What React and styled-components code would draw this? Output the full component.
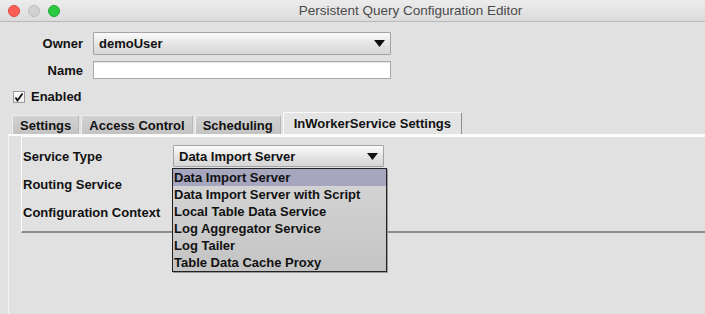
import * as React from "react"
import styled, { createGlobalStyle } from "styled-components"

const Global = createGlobalStyle`
  html, body {
    margin: 0;
    padding: 0;
    background: #e1e1e1;
  }
  body {
    font-family: "Liberation Sans", Arial, sans-serif;
    font-size: 12px;
    color: #111;
  }
`

const Window = styled.div`
  width: 705px;
  height: 314px;
  overflow: hidden;
  background: #e1e1e1;
  display: flex;
  flex-direction: column;
`

const TitleBar = styled.div`
  height: 22px;
  flex: none;
  box-sizing: border-box;
  border-bottom: 1px solid #b9b9b9;
  background: linear-gradient(#ececec, #dcdcdc);
  display: flex;
  align-items: center;
  padding-left: 8px;
`

const Light = styled.span`
  width: 12px;
  height: 12px;
  border-radius: 50%;
  margin-right: 8px;
  box-sizing: border-box;
  background: ${p => p.color};
  border: 1px solid ${p => p.edge};
`

const Title = styled.div`
  flex: 1;
  text-align: center;
  font-size: 13.5px;
  color: #4a4a4a;
  padding-left: 48px;
`

const Body = styled.div`
  flex: 1;
  display: flex;
  flex-direction: column;
  padding-top: 10px;
`

const Form = styled.div`
  display: grid;
  grid-template-columns: 83px 298px;
  column-gap: 10px;
  row-gap: 6px;
  align-items: center;
`

const Label = styled.div`
  font-weight: bold;
  font-size: 13px;
  text-align: ${p => (p.left ? "left" : "right")};
`

const Combo = styled.div`
  height: ${p => p.h || 23}px;
  box-sizing: border-box;
  border: 1px solid #a3a3a3;
  border-radius: 1px;
  background: linear-gradient(#fbfbfb, #e4e4e4 55%, #d6d6d6);
  display: flex;
  align-items: center;
  justify-content: space-between;
  padding: 0 5px 0 5px;
  font-weight: bold;
  font-size: 13px;
  position: relative;
`

const Arrow = () => (
  <svg width="11" height="7" viewBox="0 0 11 7">
    <path d="M0 0 L11 0 L5.5 7 Z" fill="#111" />
  </svg>
)

const TextField = styled.div`
  height: 18px;
  box-sizing: border-box;
  border: 1px solid #a8a8a8;
  background: #fff;
  box-shadow: inset 0 1px 0 #e6e6e6;
`

const CheckRow = styled.div`
  display: flex;
  align-items: center;
  gap: 6px;
  margin: 10px 0 0 13px;
  font-weight: bold;
  font-size: 13px;
`

const Box = styled.span`
  width: 12px;
  height: 12px;
  box-sizing: border-box;
  border: 1px solid #9a9a9a;
  background: linear-gradient(#ffffff, #ececec);
  display: flex;
  align-items: center;
  justify-content: center;
`

const Tabs = styled.div`
  display: flex;
  align-items: flex-end;
  gap: 2px;
  margin: 8px 0 0 12px;
  height: 22px;
`

const Tab = styled.div`
  height: ${p => (p.active ? 22 : 19)}px;
  box-sizing: border-box;
  padding: 0 ${p => (p.active ? 10 : 7)}px;
  display: flex;
  align-items: center;
  font-weight: bold;
  font-size: 13px;
  background: ${p => (p.active ? "#e4e4e4" : "linear-gradient(#d2d2d2, #c3c3c3)")};
  border-top: 1px solid ${p => (p.active ? "#fafafa" : "#ededed")};
  border-left: 1px solid ${p => (p.active ? "#fafafa" : "#ededed")};
  border-right: 1px solid ${p => (p.active ? "#8e8e8e" : "#b8b8b8")};
  border-radius: 2px 2px 0 0;
`

const Pane = styled.div`
  flex: 1;
  margin-left: 8px;
  border-top: 2px solid #fbfbfb;
  border-left: 1px solid #f6f6f6;
  padding: 0 0 0 12px;
`

const Inner = styled.div`
  height: 97px;
  box-sizing: border-box;
  border-left: 1px solid #fbfbfb;
  border-top: 1px solid #fbfbfb;
  border-bottom: 2px solid #8c8c8c;
  display: grid;
  grid-template-columns: 150px 211px;
  grid-auto-rows: 28px;
  align-content: start;
  padding: 5px 0 0 1px;
  align-items: center;
`

const Popup = styled.div`
  position: absolute;
  left: -2px;
  top: 22px;
  width: 215px;
  box-sizing: border-box;
  border: 1px solid #222;
  background: linear-gradient(#d6d6d6, #c4c4c4);
  z-index: 2;
  box-shadow: 1px 1px 0 #9a9a9a;
`

const Item = styled.div`
  height: 17px;
  line-height: 17px;
  padding-left: 1px;
  font-weight: bold;
  font-size: 13px;
  background: ${p => (p.selected ? "#a6a6be" : "transparent")};
`

const services = [
  "Data Import Server",
  "Data Import Server with Script",
  "Local Table Data Service",
  "Log Aggregator Service",
  "Log Tailer",
  "Table Data Cache Proxy",
]

export default function App() {
  return (
    <Window>
      <Global />
      <TitleBar>
        <Light color="#fc5f57" edge="#de4a43" />
        <Light color="#d2d2d2" edge="#bcbcbc" />
        <Light color="#2ac940" edge="#1ea930" />
        <Title>Persistent Query Configuration Editor</Title>
      </TitleBar>
      <Body>
        <Form>
          <Label>Owner</Label>
          <Combo>
            demoUser
            <Arrow />
          </Combo>
          <Label>Name</Label>
          <TextField />
        </Form>
        <CheckRow>
          <Box>
            <svg width="10" height="10" viewBox="0 0 10 10">
              <path d="M1.5 5.5 L3.5 8.5 L8.5 1.5" stroke="#111" strokeWidth="1.8" fill="none" />
            </svg>
          </Box>
          Enabled
        </CheckRow>
        <Tabs>
          <Tab>Settings</Tab>
          <Tab>Access Control</Tab>
          <Tab>Scheduling</Tab>
          <Tab active>InWorkerService Settings</Tab>
        </Tabs>
        <Pane>
          <Inner>
            <Label left>Service Type</Label>
            <Combo h={22}>
              Data Import Server
              <Arrow />
              <Popup>
                {services.map((s, i) => (
                  <Item key={s} selected={i === 0}>{s}</Item>
                ))}
              </Popup>
            </Combo>
            <Label left>Routing Service</Label>
            <div />
            <Label left>Configuration Context</Label>
            <div />
          </Inner>
        </Pane>
      </Body>
    </Window>
  )
}
